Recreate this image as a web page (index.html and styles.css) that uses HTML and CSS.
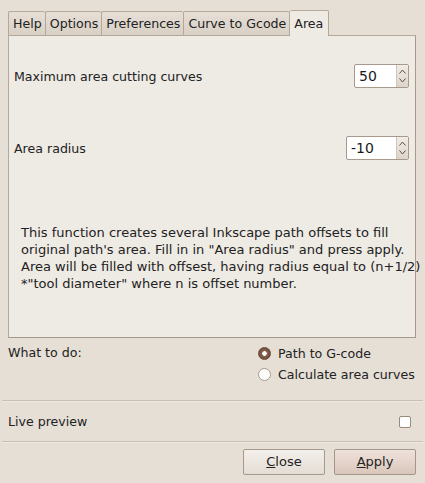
FILE: index.html
```html
<!DOCTYPE html>
<html>
<head>
<meta charset="utf-8">
<link rel="stylesheet" href="styles.css">
</head>
<body>
<div class="dialog">
  <div class="tabs">
    <div class="tab">Help</div>
    <div class="tab">Options</div>
    <div class="tab">Preferences</div>
    <div class="tab">Curve to Gcode</div>
    <div class="tab active">Area</div>
  </div>
  <div class="panel">
    <div class="row row-first">
      <span class="label">Maximum area cutting curves</span>
      <div class="spin spin-short">
        <div class="entry">50</div>
        <div class="arrows">
          <svg width="7" height="5" viewBox="0 0 7 5"><path d="M0.5 4.5 L3.5 1 L6.5 4.5" fill="none" stroke="#5a5048" stroke-width="1"/></svg>
          <svg width="7" height="5" viewBox="0 0 7 5"><path d="M0.5 0.5 L3.5 4 L6.5 0.5" fill="none" stroke="#5a5048" stroke-width="1"/></svg>
        </div>
      </div>
    </div>
    <div class="row row-second">
      <span class="label">Area radius</span>
      <div class="spin spin-long">
        <div class="entry">-10</div>
        <div class="arrows">
          <svg width="7" height="5" viewBox="0 0 7 5"><path d="M0.5 4.5 L3.5 1 L6.5 4.5" fill="none" stroke="#5a5048" stroke-width="1"/></svg>
          <svg width="7" height="5" viewBox="0 0 7 5"><path d="M0.5 0.5 L3.5 4 L6.5 0.5" fill="none" stroke="#5a5048" stroke-width="1"/></svg>
        </div>
      </div>
    </div>
    <p class="desc">This function creates several Inkscape path offsets to fill<br>original path's area. Fill in in "Area radius" and press apply.<br>Area will be filled with offsest, having radius equal to (n+1/2)<br>*"tool diameter" where n is offset number.</p>
  </div>
  <div class="todo">
    <span class="label">What to do:</span>
    <div class="radios">
      <div class="radio-row"><span class="radio checked"></span><span>Path to G-code</span></div>
      <div class="radio-row"><span class="radio"></span><span>Calculate area curves</span></div>
    </div>
  </div>
</div>
<div class="sep"></div>
<div class="preview">
  <span>Live preview</span>
  <span class="check"></span>
</div>
<div class="sep"></div>
<div class="buttons">
  <div class="btn"><span class="u">C</span>lose</div>
  <div class="btn btn-apply"><span class="u">A</span>pply</div>
</div>
</body>
</html>
```

FILE: styles.css
```css
html, body {
  margin: 0;
  padding: 0;
}
body {
  width: 425px;
  height: 483px;
  background: #e6dfd6;
  font-family: "DejaVu Sans", sans-serif;
  font-size: 12.6px;
  color: #222;
  overflow: hidden;
}
.dialog {
  padding: 0 9px 0 8px;
}
.tabs {
  display: flex;
  align-items: flex-end;
  margin-top: 10px;
  height: 25px;
  position: relative;
  z-index: 1;
}
.tab {
  height: 23px;
  line-height: 23px;
  padding: 0 3px 0 4px;
  border: 1px solid #b5a898;
  border-bottom: none;
  border-right: none;
  background: linear-gradient(#e6dfd6, #d9d0c5);
  border-radius: 2px 2px 0 0;
  color: #222;
}
.tab:nth-child(4) {
  border-right: 1px solid #b5a898;
}
.tab.active {
  height: 25px;
  line-height: 25px;
  margin-bottom: -1px;
  background: #eeeae4;
  border: 1px solid #b5a898;
  border-bottom: none;
  border-left: none;
  padding: 0 5px 0 4px;
  border-radius: 2px 2px 0 0;
}
.panel {
  height: 301px;
  background: #eeeae4;
  border: 1px solid #b5a898;
  border-right-color: #a8998a;
  border-bottom-color: #a8998a;
  padding: 0 6px 0 5px;
  display: flex;
  flex-direction: column;
}
.row {
  display: flex;
  align-items: center;
  justify-content: space-between;
  height: 24px;
}
.row-first {
  margin-top: 28px;
}
.row-second {
  margin-top: 48px;
}
.spin {
  display: flex;
  height: 24px;
  box-sizing: border-box;
  border: 1px solid #a89a8b;
  border-radius: 2px;
  background: #fff;
}
.spin-short {
  width: 55px;
}
.spin-long {
  width: 63px;
}
.entry {
  flex: 1;
  padding-left: 4px;
  line-height: 22px;
  font-size: 14px;
  color: #1a1a1a;
}
.arrows {
  width: 12px;
  border-left: 1px solid #cfc6bb;
  background: linear-gradient(#f0ece7, #ddd5cb);
  display: flex;
  flex-direction: column;
  justify-content: space-around;
  align-items: center;
  padding: 2px 0;
  box-sizing: border-box;
}
.arrows svg {
  display: block;
}
.desc {
  margin: 64px 0 0 0;
  padding-left: 7px;
  line-height: 17px;
  font-size: 13px;
  white-space: nowrap;
  color: #222;
}
.todo {
  display: flex;
  margin-top: 7px;
  height: 55px;
}
.todo .label {
  line-height: 16px;
  flex: 1;
}
.radios {
  display: flex;
  flex-direction: column;
  gap: 4px;
  width: 158px;
  white-space: nowrap;
}
.radio-row {
  display: flex;
  align-items: center;
  gap: 7px;
  height: 17px;
}
.radio {
  width: 13px;
  height: 13px;
  flex: none;
  box-sizing: border-box;
  border-radius: 50%;
  border: 1px solid #a89a8b;
  background: #fff;
  display: inline-block;
}
.radio.checked {
  border-color: #6a4a38;
  background: radial-gradient(circle, #fff 0 2px, #8a6450 2.5px, #6b4b39 6px);
}
.sep {
  height: 1px;
  background: #cbbfb1;
  margin: 0 2px;
  border-bottom: 1px solid #efe9e2;
}
.preview {
  display: flex;
  align-items: center;
  justify-content: space-between;
  height: 39px;
  padding: 0 14px 0 8px;
}
.check {
  width: 12px;
  height: 12px;
  box-sizing: border-box;
  border: 1px solid #998b7c;
  border-radius: 2px;
  background: #fff;
}
.buttons {
  display: flex;
  justify-content: flex-end;
  gap: 9px;
  padding: 6px 9px 0 0;
}
.btn {
  width: 82px;
  height: 26px;
  box-sizing: border-box;
  border: 1px solid #a69a8c;
  border-radius: 2px;
  background: linear-gradient(#f3efeb, #e4ddd4);
  text-align: center;
  line-height: 24px;
  font-size: 13px;
  color: #222;
}
.btn-apply {
  background: linear-gradient(#efe2db, #d9c6bb);
  border-color: #a6968a;
}
.u {
  text-decoration: underline;
}
```
